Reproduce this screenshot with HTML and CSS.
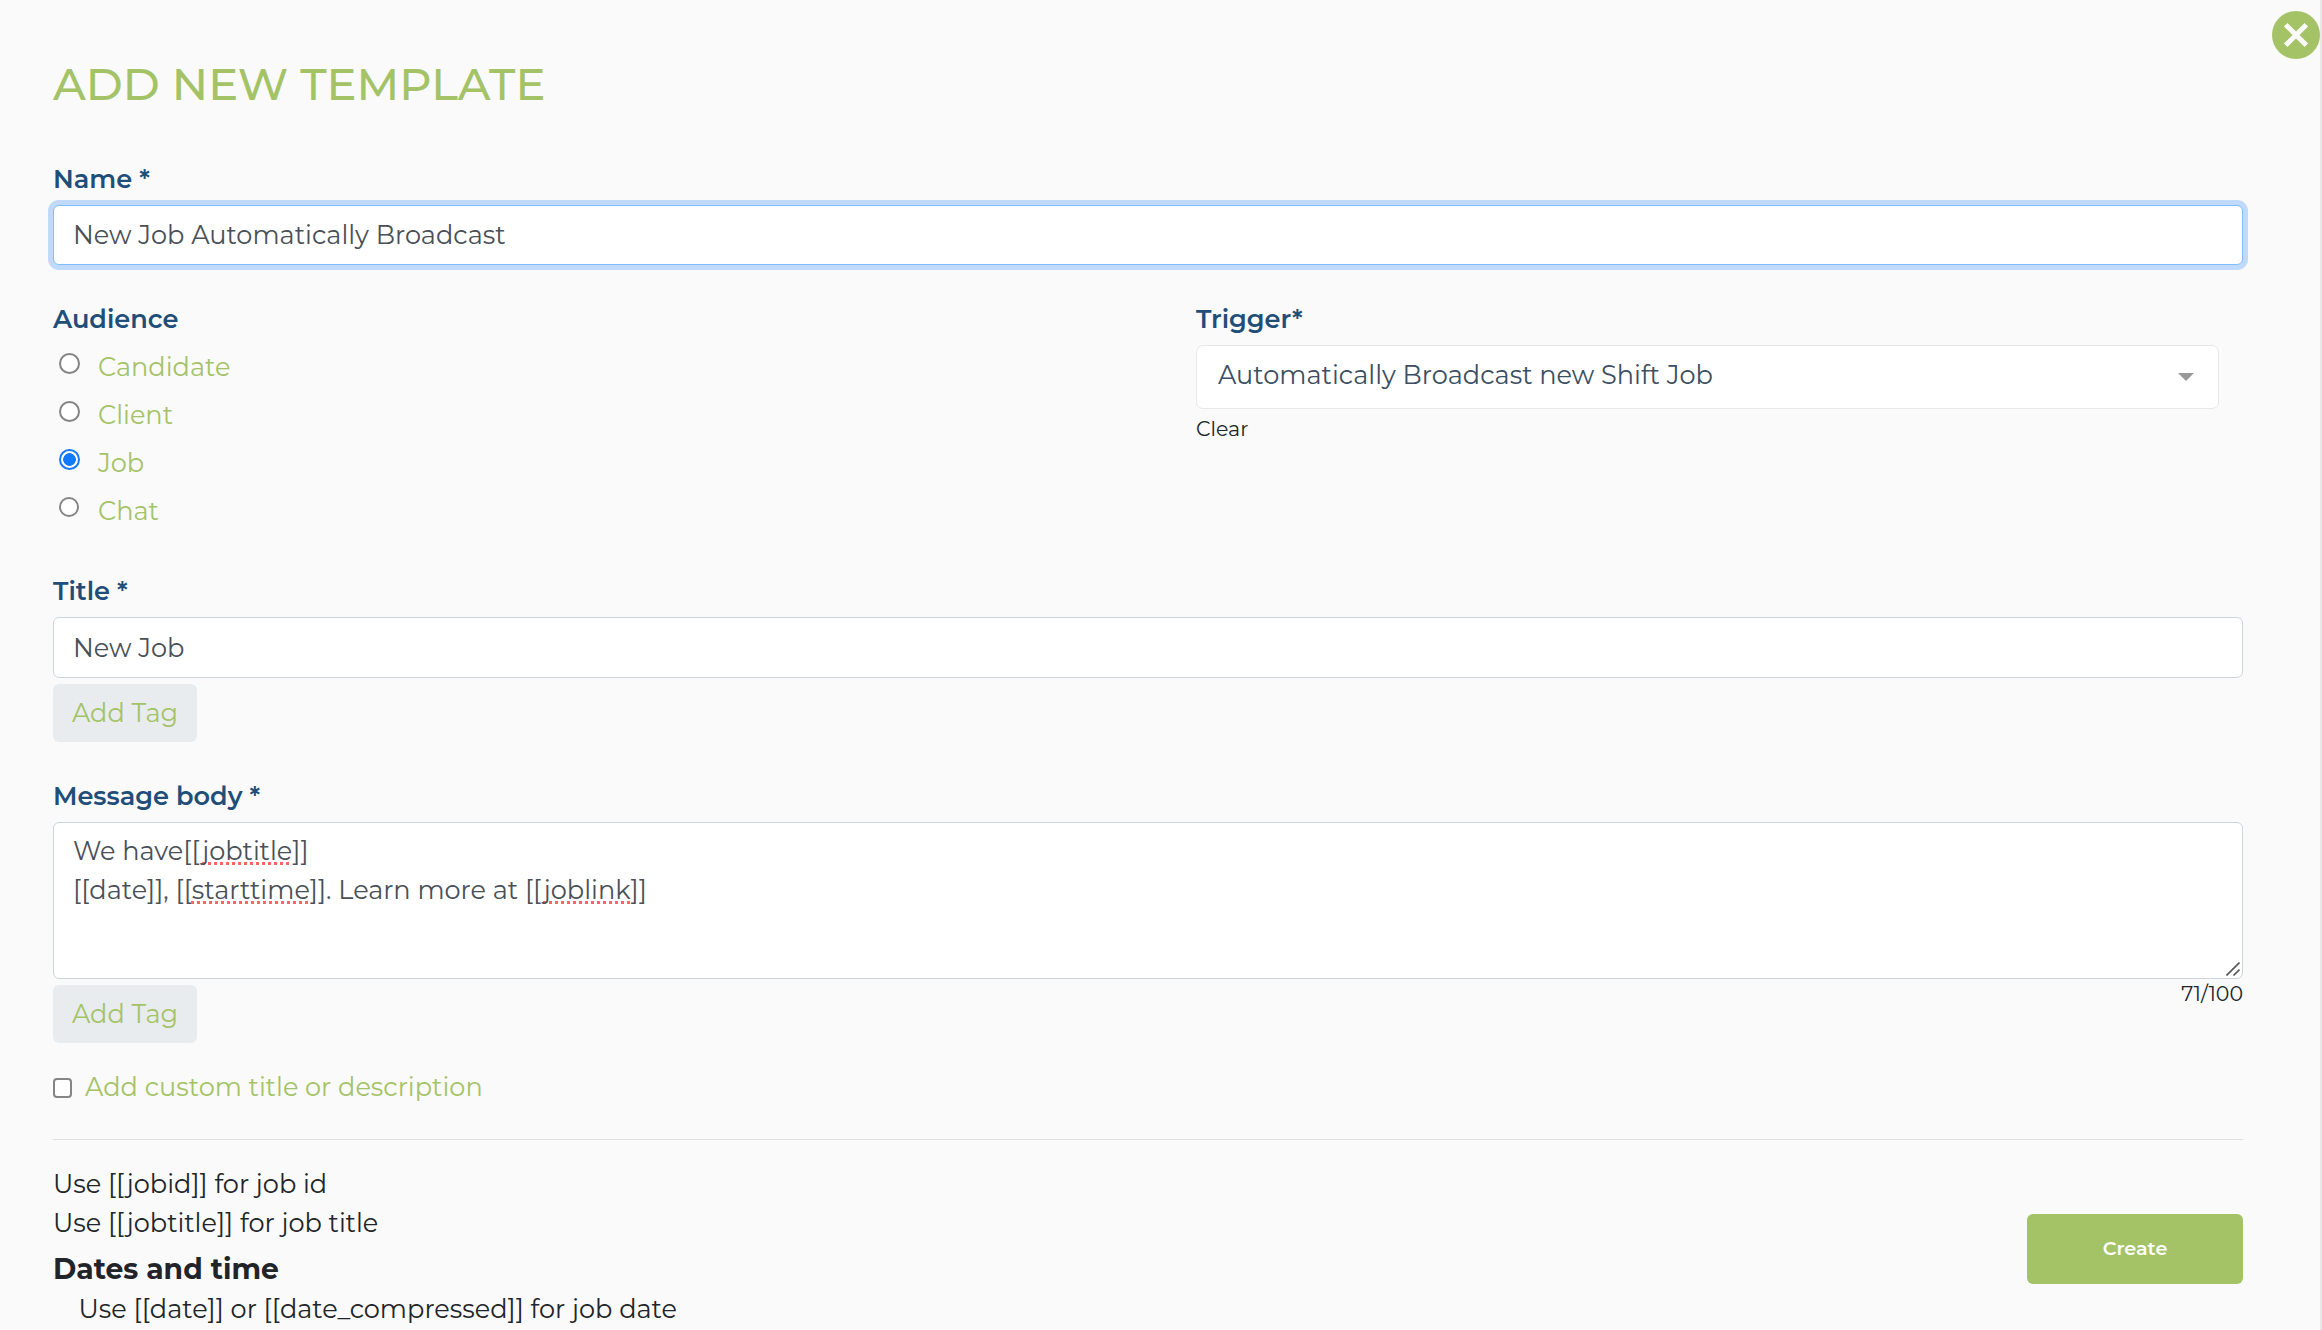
FILE: index.html
```html
<!DOCTYPE html>
<html lang="en">
<head>
    <meta charset="UTF-8">
    <meta name="viewport" content="width=device-width, initial-scale=1.0">
    <title>Add New Template</title>
    <link rel="stylesheet" href="styles.css">
</head>
<body>
    <div class="modal">
        <button class="close" aria-label="Close">
            <svg viewBox="0 0 48 48" width="48" height="48">
                <circle cx="24" cy="24" r="24" fill="#a4c367"/>
                <path d="M13.7 13.7L34.3 34.3M34.3 13.7L13.7 34.3" stroke="#fafafa" stroke-width="5"/>
            </svg>
        </button>

        <h1 class="heading">ADD NEW TEMPLATE</h1>

        <label class="label" for="name">Name *</label>
        <input class="field focused" id="name" type="text" value="New Job Automatically Broadcast">

        <div class="columns">
            <div class="audience">
                <div class="label">Audience</div>
                <label class="option"><input type="radio" name="audience"><span>Candidate</span></label>
                <label class="option"><input type="radio" name="audience"><span>Client</span></label>
                <label class="option"><input type="radio" name="audience" checked><span>Job</span></label>
                <label class="option last"><input type="radio" name="audience"><span>Chat</span></label>
            </div>
            <div class="trigger">
                <div class="label">Trigger*</div>
                <div class="select"><span>Automatically Broadcast new Shift Job</span><i class="arrow"></i></div>
                <div class="clear">Clear</div>
            </div>
        </div>

        <label class="label" for="title">Title *</label>
        <input class="field title-field" id="title" type="text" value="New Job">
        <button class="tag">Add Tag</button>

        <div class="label message-label">Message body *</div>
        <div class="message">
            <div>We have[[<span class="typo">jobtitle</span>]]</div>
            <div>[[date]], [[<span class="typo">starttime</span>]]. Learn more at [[<span class="typo">joblink</span>]]</div>
            <svg class="grip" viewBox="0 0 14 14" width="14" height="14">
                <path d="M0.5 13.5L13.5 0.5M7.5 13.5L13.5 7.5" stroke="#555" stroke-width="1.6"/>
            </svg>
        </div>
        <div class="under-message">
            <button class="tag">Add Tag</button>
            <span class="count">71/100</span>
        </div>

        <label class="custom"><input type="checkbox"><span>Add custom title or description</span></label>

        <hr>

        <div class="footer">
            <div class="help">
                <div>Use [[jobid]] for job id</div>
                <div>Use [[jobtitle]] for job title</div>
                <h4>Dates and time</h4>
                <div class="indent">Use [[date]] or [[date_compressed]] for job date</div>
            </div>
            <button class="create">Create</button>
        </div>
    </div>
</body>
</html>
```

FILE: styles.css
```css
* {
    box-sizing: border-box;
}
body {
    margin: 0;
    height: 1330px;
    overflow: hidden;
    background: #fafafa;
    color: #212529;
    font-family: Montserrat, Inter, sans-serif;
    font-size: 25.6px;
    line-height: 39px;
}
button, input {
    font: inherit;
}
.modal {
    position: relative;
    height: 1330px;
    padding: 57px 77px 0 53px;
    border-right: 2px solid #e8e8e8;
    overflow: hidden;
}
.close {
    position: absolute;
    top: 11px;
    right: 0;
    width: 48px;
    height: 48px;
    padding: 0;
    border: 0;
    background: none;
}
.close svg {
    display: block;
}
.heading {
    margin: 0 0 48px;
    color: #a4c367;
    font-size: 44.8px;
    font-weight: 500;
    line-height: 54px;
}
.label {
    display: block;
    margin-bottom: 7px;
    color: #1f4e79;
    font-weight: 600;
}
.field {
    display: block;
    width: 100%;
    height: 60px;
    padding: 0 19px;
    border: 1px solid #ced4da;
    border-radius: 6px;
    background: #fff;
    color: #495057;
    outline: none;
}
.focused {
    padding-bottom: 2px;
    border-color: #80bdff;
    box-shadow: 0 0 0 5px #bfdafa;
}
.title-field {
    height: 61px;
}
.columns {
    display: flex;
    height: 272px;
    margin-top: 34px;
}
.audience {
    width: 1143px;
}
.audience .label {
    margin-bottom: 5px;
}
.option {
    display: flex;
    align-items: center;
    height: 48px;
    padding-left: 6px;
    color: #a4c367;
}
.option span {
    margin-bottom: 2px;
}
.option input {
    appearance: none;
    width: 21px;
    height: 21px;
    margin: 0 18px 7px 0;
    border: 2px solid #858585;
    border-radius: 50%;
    background: #fff;
}
.option.last input {
    width: 20px;
    height: 20px;
    margin: 0 19px 9px 0;
}
.option input:checked {
    border-color: #1479ff;
    background: radial-gradient(circle, #1479ff 6px, #fff 6.6px);
}
.trigger {
    width: 1023px;
}
.select {
    display: flex;
    justify-content: space-between;
    height: 64px;
    padding: 9px 24px 0 21px;
    border: 1px solid #e8e8e8;
    border-radius: 7px;
    background: #fff;
    color: #3b4f63;
}
.arrow {
    margin-top: 18px;
    height: 0;
    border: 8px solid transparent;
    border-top-color: #999;
    border-bottom: 0;
}
.clear {
    margin-top: 5px;
    font-size: 20.5px;
    line-height: 30px;
}
.tag {
    display: block;
    width: 144px;
    height: 58px;
    margin-top: 6px;
    padding: 0 0 1px;
    border: 0;
    border-radius: 6px;
    background: #e9ecef;
    color: #a4c367;
}
.message-label {
    margin-top: 34px;
}
.message {
    position: relative;
    height: 157px;
    padding: 8px 19px;
    border: 1px solid #ced4da;
    border-radius: 6px;
    background: #fff;
    color: #495057;
}
.typo {
    text-decoration: underline dotted 3px #ff6464;
    text-underline-offset: 2px;
    text-decoration-skip-ink: none;
}
.grip {
    position: absolute;
    right: 2px;
    bottom: 2px;
}
.under-message {
    display: flex;
    justify-content: space-between;
}
.count {
    font-size: 20.5px;
    line-height: 30px;
}
.custom {
    display: flex;
    align-items: center;
    margin-top: 24px;
    color: #a4c367;
}
.custom input {
    appearance: none;
    width: 19px;
    height: 20px;
    margin: 3px 13px 0 0;
    border: 2px solid #858585;
    border-radius: 4px;
    background: #fff;
}
hr {
    margin: 33px 0 24px;
    border: 0;
    border-top: 1px solid #dfe0e0;
}
.footer {
    display: flex;
    justify-content: space-between;
    align-items: flex-start;
}
.help h4 {
    margin: 10px 0 3px;
    font-size: 28.2px;
    font-weight: 700;
    line-height: 34px;
}
.indent {
    padding-left: 25.6px;
}
.create {
    width: 216px;
    height: 70px;
    margin-top: 50px;
    padding: 0 0 2px;
    border: 0;
    border-radius: 6px;
    background: #a4c367;
    color: #fff;
    font-size: 19.2px;
    font-weight: 600;
}
```
